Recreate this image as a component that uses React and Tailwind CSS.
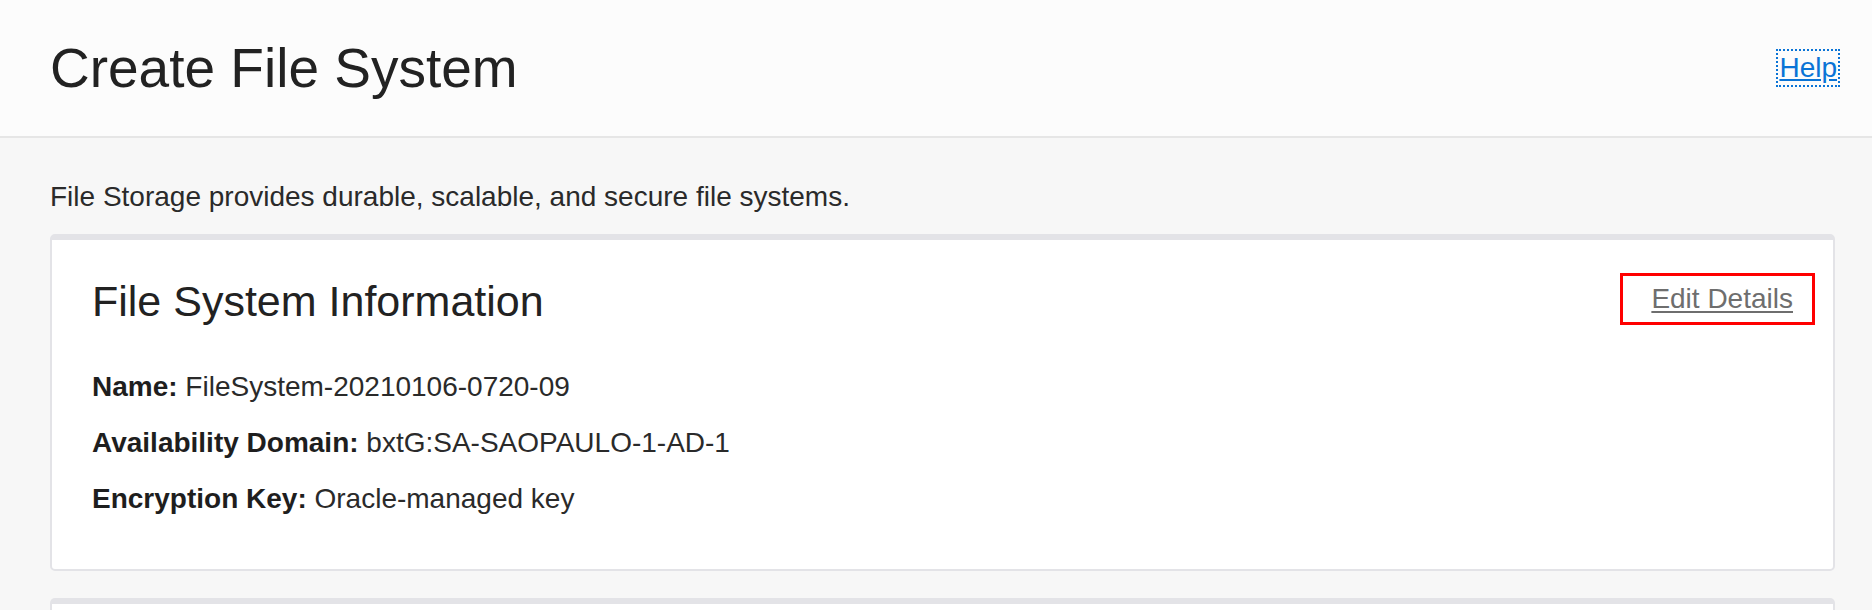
export default function App() {
  return (
    <div className="min-h-[610px] bg-[#f7f7f7] text-[#2a2a2a]" style={{ fontFamily: '"Liberation Sans", Arial, sans-serif' }}>
      <header className="h-[138px] bg-[#fcfcfc] border-b-2 border-[#e6e6e6] pl-[50px] pr-[34px] flex items-center justify-between">
        <h1 className="text-[55px] leading-none text-[#222222] font-normal">Create File System</h1>
        <a href="/" className="text-[28px] leading-[34px] text-[#0a74d6] underline outline-2 outline-dotted outline-[#0a74d6] outline-offset-0 px-[1px]">
          Help
        </a>
      </header>

      <main className="pl-[50px] pr-[37px]">
        <p className="pt-[39px] text-[28px] leading-[40px] text-[#2a2a2a]">
          File Storage provides durable, scalable, and secure file systems.
        </p>

        <section className="mt-[17px] bg-white border-x-2 border-b-2 border-t-[6px] border-[#e3e3e7] rounded-[5px] pl-[40px] pr-[40px] pt-[33px] pb-[50px]">
          <div className="flex items-center justify-between h-[52px]">
            <h2 className="text-[43px] leading-[52px] text-[#222222] font-normal mt-[3px]">File System Information</h2>
            <div className="h-[52px] border-[3px] border-[#ff0000] pl-[28px] pr-[19px] -mr-[22px] flex items-center">
              <a href="/" className="text-[28px] leading-none text-[#6e6e6e] underline underline-offset-[3px]">
                Edit Details
              </a>
            </div>
          </div>

          <div className="mt-[42px] flex flex-col gap-[16px] text-[28px] leading-[40px]">
            <p>
              <span className="font-bold text-[#1e1e1e]">Name:</span> FileSystem-20210106-0720-09
            </p>
            <p>
              <span className="font-bold text-[#1e1e1e]">Availability Domain:</span> bxtG:SA-SAOPAULO-1-AD-1
            </p>
            <p>
              <span className="font-bold text-[#1e1e1e]">Encryption Key:</span> Oracle-managed key
            </p>
          </div>
        </section>

        <section className="mt-[27px] h-[60px] bg-white border-x-2 border-t-[6px] border-[#e3e3e7] rounded-t-[5px]" />
      </main>
    </div>
  );
}
